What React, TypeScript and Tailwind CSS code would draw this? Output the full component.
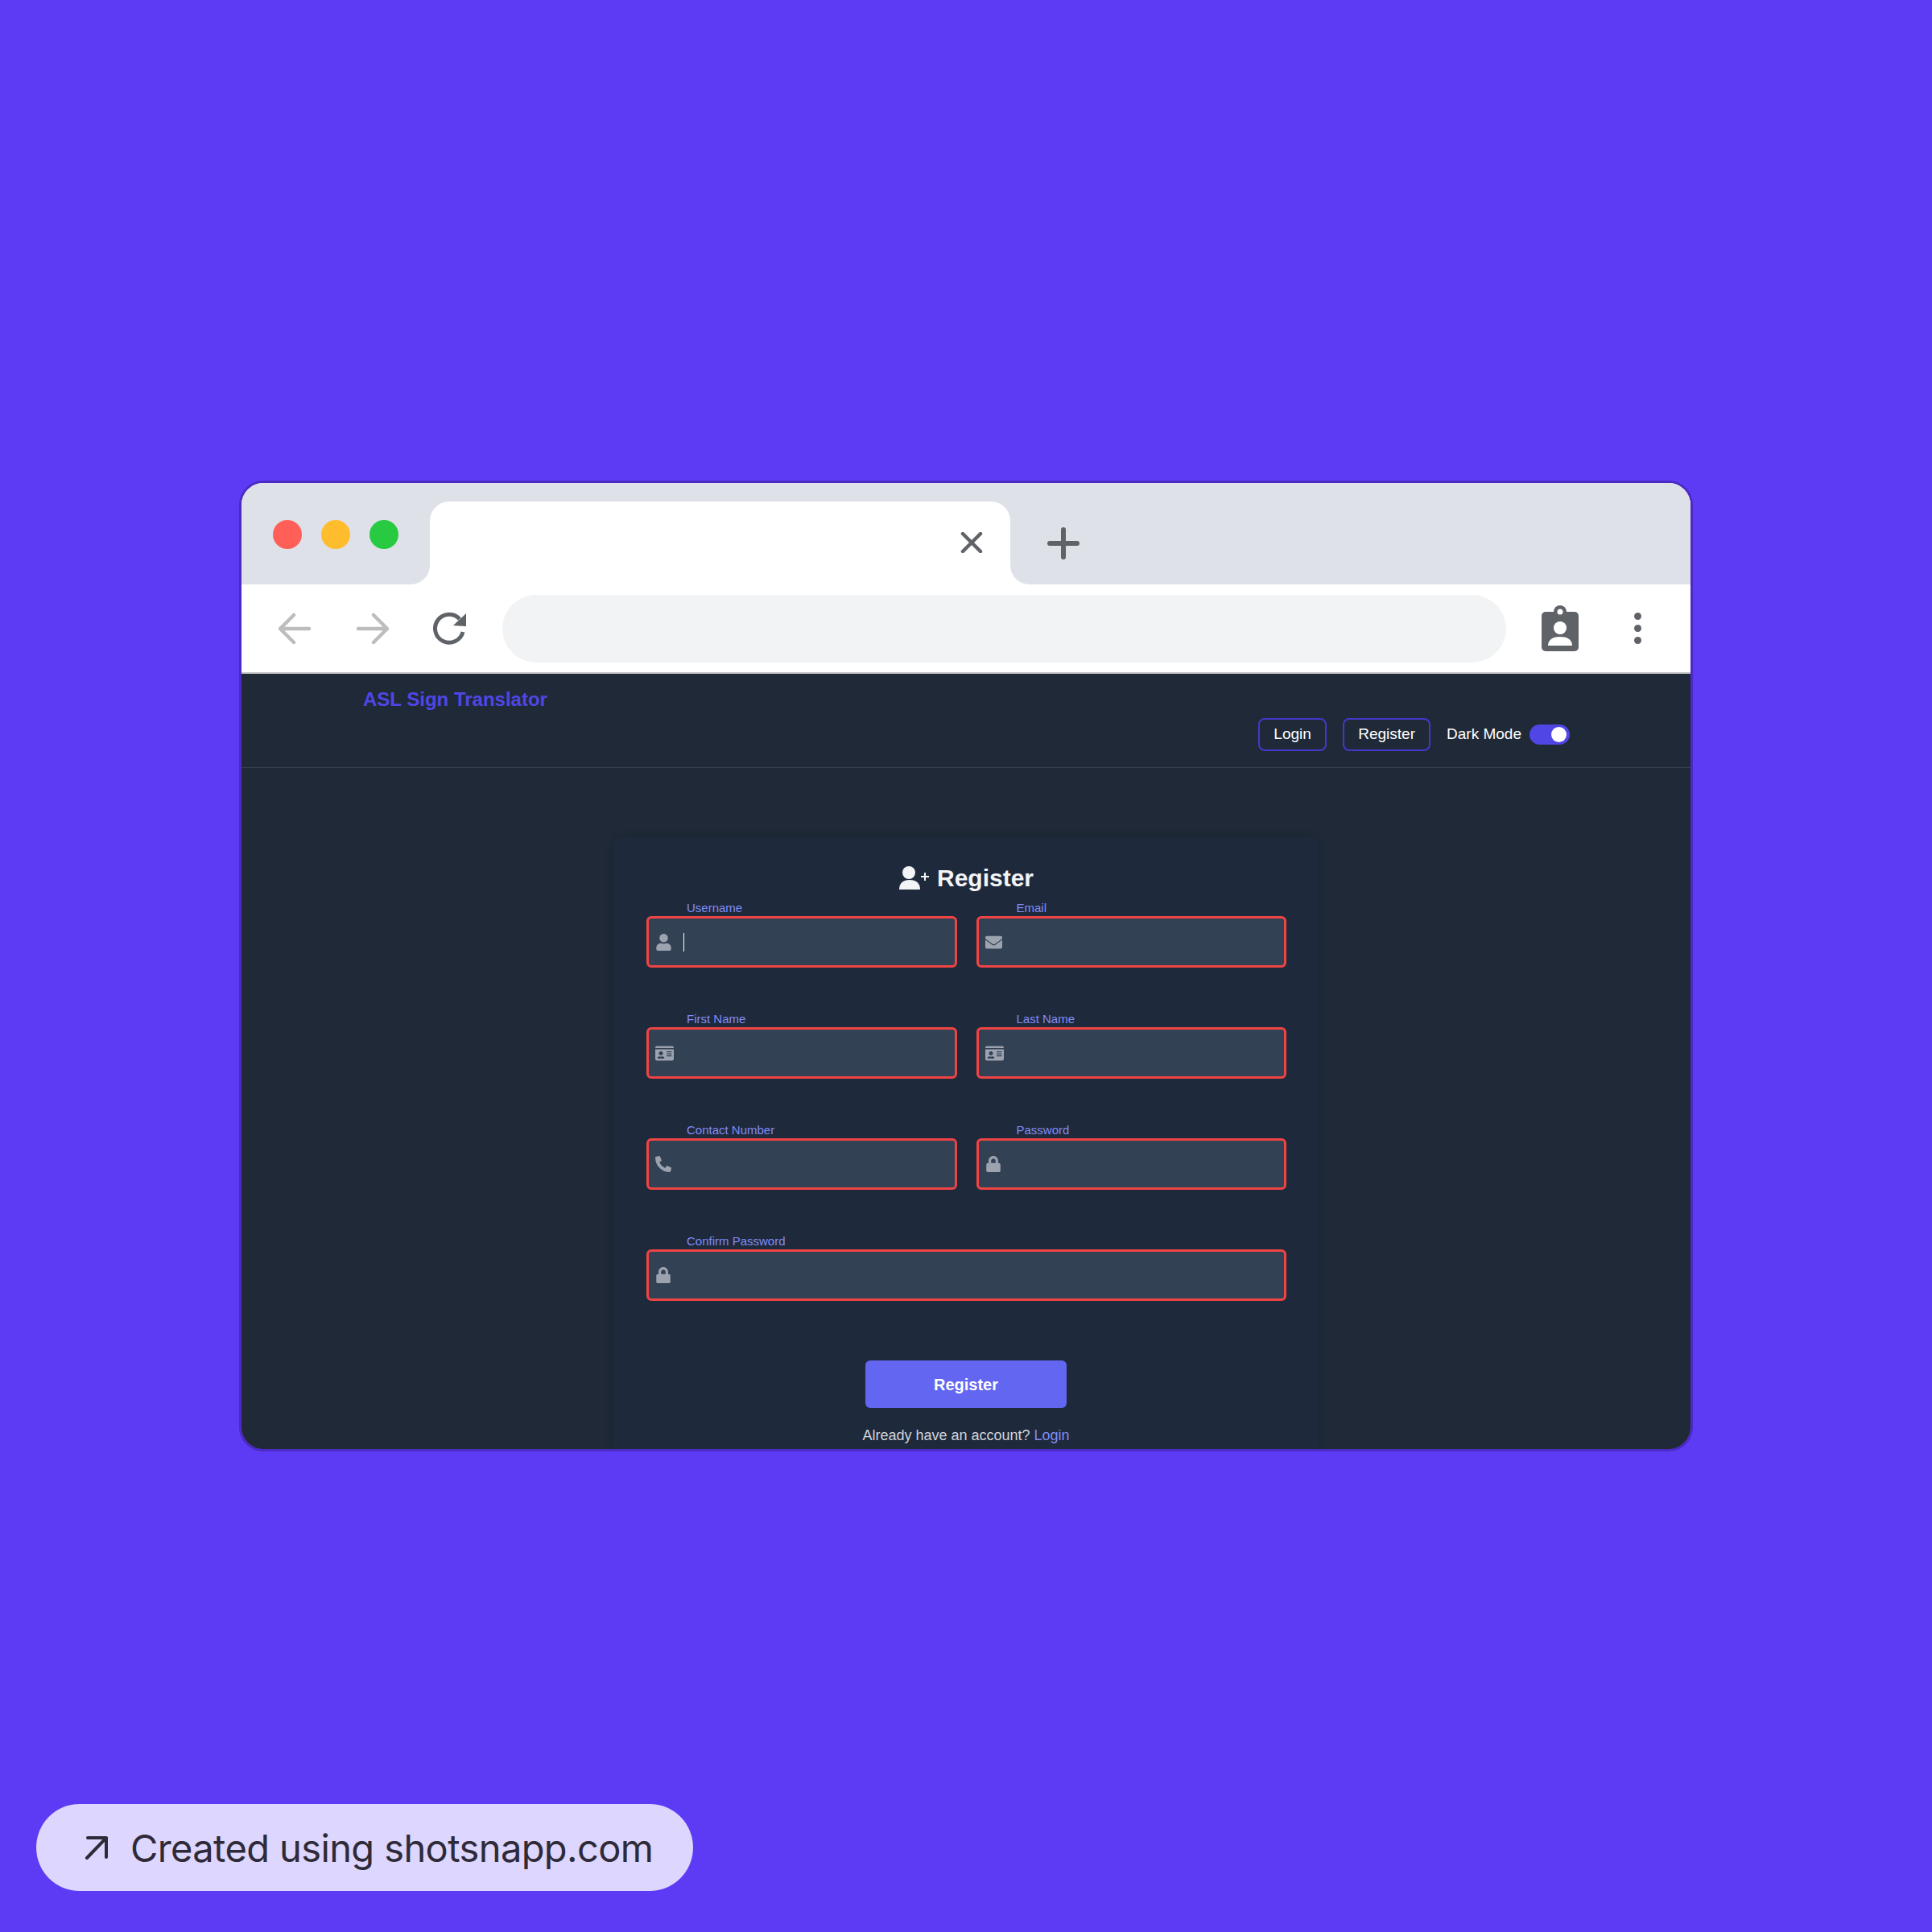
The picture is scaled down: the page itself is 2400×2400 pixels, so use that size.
import React from 'react';
import { FaEnvelope, FaIdCard, FaLock, FaPhoneAlt, FaUser } from 'react-icons/fa';

const sans = { fontFamily: '"Liberation Sans", Arial, sans-serif' };

function Field({ label, icon, caret, wide }: { label: string; icon: React.ReactNode; caret?: boolean; wide?: boolean }) {
  return (
    <div className={wide ? 'col-span-2 flex flex-col' : 'flex flex-col'}>
      <label className="pl-[50px] text-[15px] leading-[20px] text-[#818cf8]">{label}</label>
      <div className="flex h-[64px] items-center rounded-[6px] border-[3px] border-[#ef4444] bg-[#334155] pl-[8px] text-[#9ca3af]">
        {icon}
        {caret && <span className="ml-[14px] h-[23px] w-[1px] bg-white" />}
      </div>
    </div>
  );
}

export default function App() {
  return (
    <div className="flex h-[2400px] w-[2400px] flex-col bg-[#5d3bf5] pt-[597px]" style={sans}>
      <div className="ml-[297px] flex h-[1206px] w-[1806px] flex-col overflow-hidden rounded-[30px] border-[3px] border-[#4c2bc4]">
        <div className="flex h-[126px] bg-white">
          <div className="flex w-[234px] items-start gap-[24px] rounded-br-[24px] bg-[#dee1e8] pl-[39px] pt-[46px]">
            <span className="h-[36px] w-[36px] rounded-full bg-[#ff5f57]" />
            <span className="h-[36px] w-[36px] rounded-full bg-[#ffbd2e]" />
            <span className="h-[36px] w-[36px] rounded-full bg-[#28ca42]" />
          </div>
          <div className="w-[721px] bg-[#dee1e8] pt-[23px]">
            <div className="flex h-[103px] items-start justify-end rounded-t-[24px] bg-white pr-[34px] pt-[38px]">
              <svg width="28" height="26" viewBox="0 0 28 26" className="text-[#5f6368]">
                <path d="M3 2 L25 24 M25 2 L3 24" stroke="currentColor" strokeWidth="4.5" strokeLinecap="round" />
              </svg>
            </div>
          </div>
          <div className="flex flex-1 items-start rounded-bl-[24px] bg-[#dee1e8] pl-[46px] pt-[55px]">
            <svg width="40" height="40" viewBox="0 0 40 40" className="text-[#5f6368]">
              <path d="M20 3 V37 M3 20 H37" stroke="currentColor" strokeWidth="6" strokeLinecap="round" />
            </svg>
          </div>
        </div>
        <div className="flex h-[111px] items-center border-b-2 border-[#c8c8c8] bg-white">
          <div className="flex items-center gap-[55px] pl-[45px] text-[#bdbdbd]">
            <svg width="42" height="40" viewBox="0 0 42 40">
              <path d="M39 20 H4 M20 3 L3 20 L20 37" fill="none" stroke="currentColor" strokeWidth="4.5" strokeLinecap="round" strokeLinejoin="round" />
            </svg>
            <svg width="42" height="40" viewBox="0 0 42 40">
              <path d="M3 20 H38 M22 3 L39 20 L22 37" fill="none" stroke="currentColor" strokeWidth="4.5" strokeLinecap="round" strokeLinejoin="round" />
            </svg>
          </div>
          {/* reload */}
          <svg width="48" height="48" viewBox="0 0 48 48" className="ml-[50px] text-[#5f6368]">
            <path d="M37 12 A17.5 17.5 0 1 0 41 28" fill="none" stroke="currentColor" strokeWidth="5" />
            <path d="M45 5 V21 L29 20 Z" fill="currentColor" />
          </svg>
          <div className="ml-[42px] h-[84px] w-[1247px] rounded-full bg-[#f1f3f4]" />
          {/* badge */}
          <svg width="46" height="58" viewBox="0 0 46 58" className="ml-[44px]">
            <rect x="0" y="8" width="46" height="49" rx="5" fill="#5f6368" />
            <circle cx="23" cy="8" r="8" fill="#5f6368" />
            <circle cx="23" cy="8" r="3.5" fill="#ffffff" />
            <circle cx="23" cy="28" r="8" fill="#ffffff" />
            <path d="M8 50 C8 42 15 39 23 39 C31 39 38 42 38 50 Z" fill="#ffffff" />
          </svg>
          <div className="ml-[69px] flex flex-col gap-[6px]">
            <span className="h-[9px] w-[9px] rounded-full bg-[#5f6368]" />
            <span className="h-[9px] w-[9px] rounded-full bg-[#5f6368]" />
            <span className="h-[9px] w-[9px] rounded-full bg-[#5f6368]" />
          </div>
        </div>
        <div className="flex flex-1 flex-col overflow-hidden bg-[#1f2937]">
          <nav className="flex h-[117px] shrink-0 flex-col border-b border-[#374151] pl-[151px] pr-[150px]">
            <div className="pt-[18px] text-[24px] font-bold leading-[28px] text-[#4f46e5]">ASL Sign Translator</div>
            <div className="mt-[9px] flex items-center justify-end text-[19px] text-white">
              <button className="h-[41px] w-[85px] rounded-[8px] border-2 border-[#4338ca]">Login</button>
              <button className="ml-[20px] h-[41px] w-[109px] rounded-[8px] border-2 border-[#4338ca]">Register</button>
              <span className="ml-[20px]">Dark Mode</span>
              <span className="ml-[10px] flex h-[25px] w-[50px] items-center justify-end rounded-full bg-[#4f46e5] pr-[4px]">
                <span className="h-[19px] w-[19px] rounded-full bg-white" />
              </span>
            </div>
          </nav>
          <div className="mx-auto mt-[86px] w-[876px] flex-1 rounded-t-[10px] bg-[#1e293b] pl-[41px] pr-[40px] pt-[29px] shadow-[0_0_12px_rgba(0,0,0,0.12)]">
            <h2 className="flex items-center justify-center gap-[10px] text-[30px] font-bold leading-[44px] text-[#f3f4f6]">
              <svg width="37" height="30" viewBox="0 0 37 30">
                <circle cx="12" cy="8" r="8" fill="currentColor" />
                <path d="M0 29 C0 21 5 17 13 17 C21 17 26 21 26 29 Z" fill="currentColor" />
                <path d="M32 8 V18 M27 13 H37" stroke="currentColor" strokeWidth="2" />
              </svg>
              Register
            </h2>
            <div className="grid grid-cols-2 gap-x-[24px] gap-y-[54px] pt-[5px]">
              <Field label="Username" icon={<FaUser size={21} />} caret />
              <Field label="Email" icon={<FaEnvelope size={21} />} />
              <Field label="First Name" icon={<FaIdCard size={23} />} />
              <Field label="Last Name" icon={<FaIdCard size={23} />} />
              <Field label="Contact Number" icon={<FaPhoneAlt size={20} />} />
              <Field label="Password" icon={<FaLock size={20} />} />
              <Field label="Confirm Password" icon={<FaLock size={20} />} wide />
            </div>
            <div className="mt-[74px] flex justify-center pr-[1px]">
              <button className="h-[59px] w-[250px] rounded-[6px] bg-[#6366f1] text-[20px] font-bold text-white">Register</button>
            </div>
            <p className="mt-[23px] pr-[1px] text-center text-[18px] leading-[22px] text-[#d1d5db]">
              Already have an account? <a className="text-[#818cf8]">Login</a>
            </p>
          </div>
        </div>
      </div>
      <div className="ml-[45px] mt-[438px] flex h-[108px] w-[816px] items-center rounded-full bg-[#ddd6fe] pl-[57px] text-[#2e2a38]" style={{ fontFamily: 'Inter, sans-serif' }}>
        <svg width="36" height="36" viewBox="0 0 36 36">
          <path d="M7 6 H30 V30 M30 6 L6 31" fill="none" stroke="currentColor" strokeWidth="4" strokeLinecap="round" strokeLinejoin="round" />
        </svg>
        <span className="ml-[24px] text-[47px] leading-none tracking-[-0.6px]">Created using shotsnapp.com</span>
      </div>
    </div>
  );
}
